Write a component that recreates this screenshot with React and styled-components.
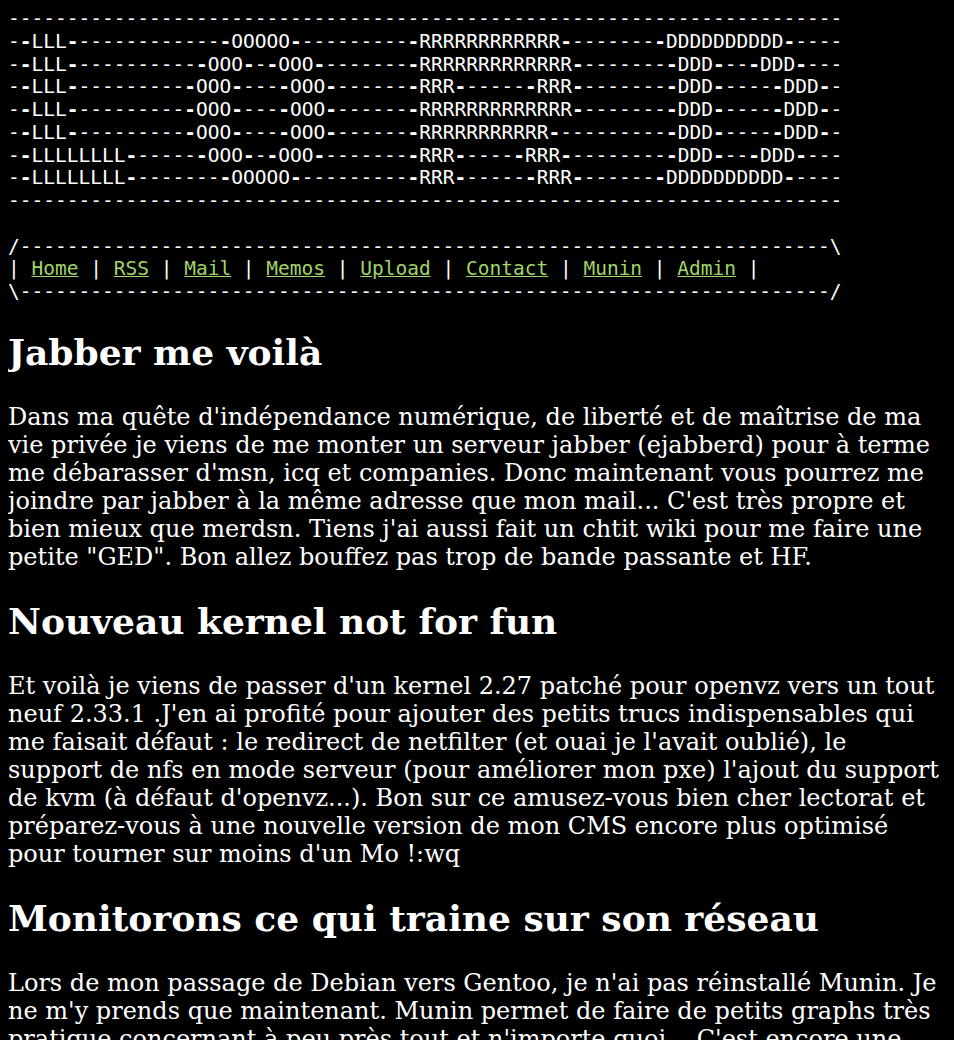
import React from "react";
import styled, { createGlobalStyle } from "styled-components";

const d = (n) => "-".repeat(n);
const r = (ch, n) => ch.repeat(n);

// the LORD banner, 71 columns wide
const bannerLines = [
    d(71),
    "--LLL" + d(14) + r("O", 5) + d(11) + r("R", 12) + d(9) + r("D", 10) + d(5),
    "--LLL" + d(12) + "OOO" + d(3) + "OOO" + d(9) + r("R", 13) + d(9) + "DDD" + d(4) + "DDD" + d(4),
    "--LLL" + d(11) + "OOO" + d(5) + "OOO" + d(8) + "RRR" + d(7) + "RRR" + d(9) + "DDD" + d(6) + "DDD" + d(2),
    "--LLL" + d(11) + "OOO" + d(5) + "OOO" + d(8) + r("R", 13) + d(9) + "DDD" + d(6) + "DDD" + d(2),
    "--LLL" + d(11) + "OOO" + d(5) + "OOO" + d(8) + r("R", 11) + d(11) + "DDD" + d(6) + "DDD" + d(2),
    "--" + r("L", 8) + d(7) + "OOO" + d(3) + "OOO" + d(9) + "RRR" + d(6) + "RRR" + d(10) + "DDD" + d(4) + "DDD" + d(4),
    "--" + r("L", 8) + d(9) + r("O", 5) + d(11) + "RRR" + d(7) + "RRR" + d(8) + r("D", 10) + d(5),
    d(71),
];

const menu = ["Home", "RSS", "Mail", "Memos", "Upload", "Contact", "Munin", "Admin"];

const posts = [
    {
        title: "Jabber me voilà",
        body: "Dans ma quête d'indépendance numérique, de liberté et de maîtrise de ma vie privée je viens de me monter un serveur jabber (ejabberd) pour à terme me débarasser d'msn, icq et companies. Donc maintenant vous pourrez me joindre par jabber à la même adresse que mon mail... C'est très propre et bien mieux que merdsn. Tiens j'ai aussi fait un chtit wiki pour me faire une petite \"GED\". Bon allez bouffez pas trop de bande passante et HF.",
    },
    {
        title: "Nouveau kernel not for fun",
        body: "Et voilà je viens de passer d'un kernel 2.27 patché pour openvz vers un tout neuf 2.33.1 .J'en ai profité pour ajouter des petits trucs indispensables qui me faisait défaut : le redirect de netfilter (et ouai je l'avait oublié), le support de nfs en mode serveur (pour améliorer mon pxe) l'ajout du support de kvm (à défaut d'openvz...). Bon sur ce amusez-vous bien cher lectorat et préparez-vous à une nouvelle version de mon CMS encore plus optimisé pour tourner sur moins d'un Mo !:wq",
    },
    {
        title: "Monitorons ce qui traine sur son réseau",
        body: "Lors de mon passage de Debian vers Gentoo, je n'ai pas réinstallé Munin. Je ne m'y prends que maintenant. Munin permet de faire de petits graphs très pratique concernant à peu près tout et n'importe quoi... C'est encore une fois un outil bien pratique pour garder un oeil sur son petit serveur.",
    },
];

const GlobalStyle = createGlobalStyle`
    body {
        margin: 8px;
        background: #000;
        color: #fff;
    }
`;

const Banner = styled.pre`
    font-family: "DejaVu Sans Mono", monospace;
    font-size: 19.5px;
    line-height: 22.75px;
    margin: 0 0 -2px;
    color: #fff;
    white-space: pre;
`;

// dashes touching a letter come out heavier in the original
const Heavy = styled.b`
    font-weight: bold;
`;

const MenuLink = styled.a`
    color: #a0d468;
    text-decoration: underline;
`;

const Post = styled.article`
    display: block;
`;

const Title = styled.h2`
    font-family: "DejaVu Serif", serif;
    font-size: 36px;
    font-weight: bold;
    margin: 29px 0 30px;
`;

const Text = styled.p`
    font-family: "DejaVu Serif", serif;
    font-size: 24px;
    line-height: 28px;
    margin: 24px 0;
`;

function BannerLine({ text }) {
    const chars = text.split("");
    return (
        <>
            {chars.map((c, i) => {
                const nearLetter =
                    c === "-" &&
                    ((chars[i - 1] && chars[i - 1] !== "-") ||
                        (chars[i + 1] && chars[i + 1] !== "-"));
                return nearLetter ? <Heavy key={i}>-</Heavy> : c;
            })}
            {"\n"}
        </>
    );
}

export default function App() {
    return (
        <>
            <GlobalStyle />
            <Banner>
                {bannerLines.map((line, i) => (
                    <BannerLine key={i} text={line} />
                ))}
                {"\n"}
                {"/" + d(69) + "\\\n"}
                {"| "}
                {menu.map((item, i) => (
                    <React.Fragment key={item}>
                        <MenuLink href="#">{item}</MenuLink>
                        {i < menu.length - 1 ? " | " : " |"}
                    </React.Fragment>
                ))}
                {"\n\\" + d(69) + "/"}
            </Banner>
            {posts.map((post) => (
                <Post key={post.title}>
                    <Title>{post.title}</Title>
                    <Text>{post.body}</Text>
                </Post>
            ))}
        </>
    );
}
